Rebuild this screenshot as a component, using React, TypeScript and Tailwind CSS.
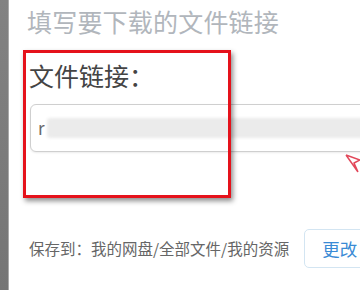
import React from 'react';

const cjk = { fontFamily: '"Noto Sans CJK SC", "Noto Sans", sans-serif' };

export default function App() {
  return (
    <div className="flex w-[360px] h-[290px] overflow-hidden bg-white" style={cjk}>
      {/* 左侧遮罩边 */}
      <div className="w-[9px] shrink-0 bg-gradient-to-b from-[#828282] to-[#757575] border-r border-[#a9a9a9]" />

      <div className="relative flex-1 flex flex-col">
        <h2 className="pl-[18px] pt-[9px] text-[25px] leading-none text-[#b1b6bc] whitespace-nowrap tracking-[0.2px]">
          填写要下载的文件链接
        </h2>

        <div className="pl-[20px] pt-[29px] text-[25px] leading-none text-[#444] whitespace-nowrap">
          文件链接：
        </div>

        <div className="ml-[21px] mt-[16px] w-[360px] h-[48px] shrink-0 rounded-[6px] border border-[#cfcfcf] bg-white shadow-[0_1px_2px_rgba(0,0,0,0.08)] flex items-center pl-[7px]">
          <span className="text-[17px] leading-none text-[#666] -mt-[2px]">r</span>
          <div className="ml-[2px] h-[20px] flex-1 bg-[#ebebeb] blur-[1.5px] rounded-[3px]" />
        </div>

        <div className="mt-[77px] pl-[20px] flex items-center whitespace-nowrap">
          <span className="text-[15.5px] leading-none text-[#666]">保存到：我的网盘/全部文件/我的资源</span>
          <button className="ml-[15px] h-[39px] w-[70px] shrink-0 rounded-[5px] border border-[#d3e5f2] bg-white text-left pl-[17px] text-[17.5px] leading-none text-[#3a8bd5]">
            更改
          </button>
        </div>

        {/* 红色标注框 */}
        <div className="absolute left-[14px] top-[50px] w-[208px] h-[148px] border-[3px] border-[#e5121b] shadow-[2px_3px_5px_rgba(0,0,0,0.45)] pointer-events-none" />

        {/* 红色箭头 */}
        <svg className="absolute left-[335px] top-[152px]" width="16" height="22" viewBox="0 0 16 22">
          <path d="M2 3 L16 8 M2 3 L14 20 M16 8 L10 11 L14 20" fill="none" stroke="#e2485a" strokeWidth="1.5" strokeLinejoin="round" />
        </svg>
      </div>
    </div>
  );
}
